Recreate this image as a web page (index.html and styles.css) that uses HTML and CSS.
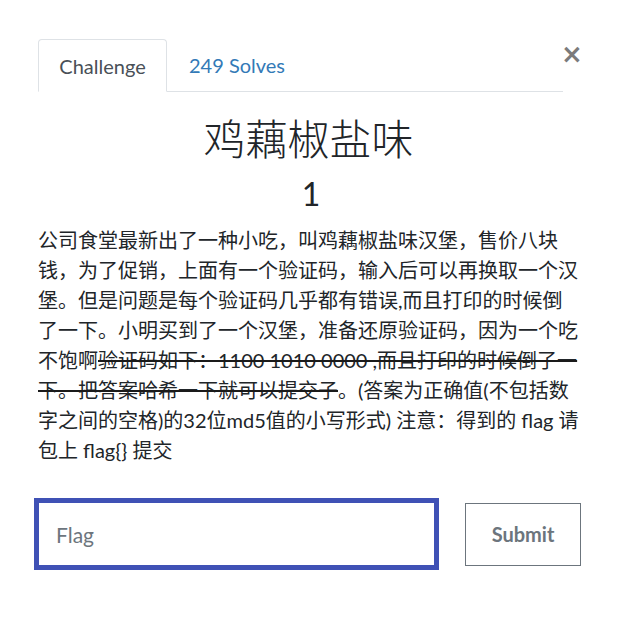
FILE: index.html
```html
<!DOCTYPE html>
<html lang="zh-CN">
<head>
<meta charset="utf-8">
<title>Challenge</title>
<link rel="stylesheet" href="styles.css">
</head>
<body>
<div class="modal">
  <button class="close" type="button" aria-label="Close">×</button>
  <ul class="tabs">
    <li class="tab active">Challenge</li>
    <li class="tab link">249 Solves</li>
  </ul>
  <h2 class="title">鸡藕椒盐味</h2>
  <h3 class="value">1</h3>
  <p class="desc">公司食堂最新出了一种小吃，叫鸡藕椒盐味汉堡，售价八块钱，为了促销，上面有一个验证码，输入后可以再换取一个汉堡。但是问题是每个验证码几乎都有错误,而且打印的时候倒了一下。小明买到了一个汉堡，准备还原验证码，因为一个吃不饱啊<s class="strike">验证码如下：1100 1010 0000 ,而且打印的时候倒了一下。把答案哈希一下就可以提交子</s>。(答案为正确值(不包括数字之间的空格)的32位md5值的小写形式) 注意：得到的 flag 请包上 flag{} 提交</p>
  <form class="form">
    <input class="flag" type="text" placeholder="Flag">
    <button class="submit" type="button">Submit</button>
  </form>
</div>
</body>
</html>
```

FILE: styles.css
```css
html, body {
  margin: 0;
  padding: 0;
  background: #ffffff;
}
body {
  font-family: Lato, "Noto Sans CJK SC", sans-serif;
  color: #212529;
}
.modal {
  position: relative;
  width: 541px;
  margin-left: 38px;
  padding-top: 39px;
}
.close {
  position: absolute;
  top: 38px;
  left: 522px;
  width: 24px;
  height: 32px;
  padding: 0;
  border: 0;
  background: none;
  font-family: "DejaVu Sans", sans-serif;
  font-size: 26px;
  font-weight: bold;
  line-height: 32px;
  color: #7b7b7b;
}
.tabs {
  display: flex;
  width: 525px;
  margin: 0;
  padding: 0;
  list-style: none;
  border-bottom: 1px solid #dee2e6;
}
.tab {
  height: 52px;
  line-height: 52px;
  font-size: 20px;
  margin-bottom: -1px;
  box-sizing: border-box;
}
.tab.active {
  width: 129px;
  text-align: center;
  color: #495057;
  border: 1px solid #dee2e6;
  border-bottom-color: #ffffff;
  border-radius: 4px 4px 0 0;
  background: #ffffff;
  height: 53px;
}
.tab.link {
  padding-left: 22px;
  color: #337ab7;
}
.title {
  margin: 21px 0 0;
  text-align: center;
  font-size: 42px;
  font-weight: 300;
  line-height: 52px;
}
.value {
  margin: 9px 0 0;
  padding-left: 5px;
  text-align: center;
  font-size: 32px;
  font-weight: normal;
  line-height: 40px;
}
.desc {
  margin: 11px 0 0;
  font-size: 20px;
  line-height: 30px;
}
.strike {
  text-decoration: line-through;
  text-decoration-thickness: 2px;
  text-decoration-color: #1a1a1a;
}
.form {
  display: flex;
  align-items: center;
  gap: 26px;
  margin: 33px 0 0 -4px;
}
.flag {
  flex-shrink: 0;
  width: 405px;
  height: 72px;
  box-sizing: border-box;
  border: 5px solid #3f51b5;
  padding: 0 17px;
  font-family: Lato, sans-serif;
  font-size: 21px;
  color: #495057;
  outline: none;
}
.flag::placeholder {
  color: #6c757d;
}
.submit {
  flex-shrink: 0;
  width: 116px;
  height: 63px;
  box-sizing: border-box;
  border: 1px solid #6c757d;
  background: #ffffff;
  font-family: Lato, sans-serif;
  font-size: 20px;
  font-weight: bold;
  color: #6c757d;
}
```
